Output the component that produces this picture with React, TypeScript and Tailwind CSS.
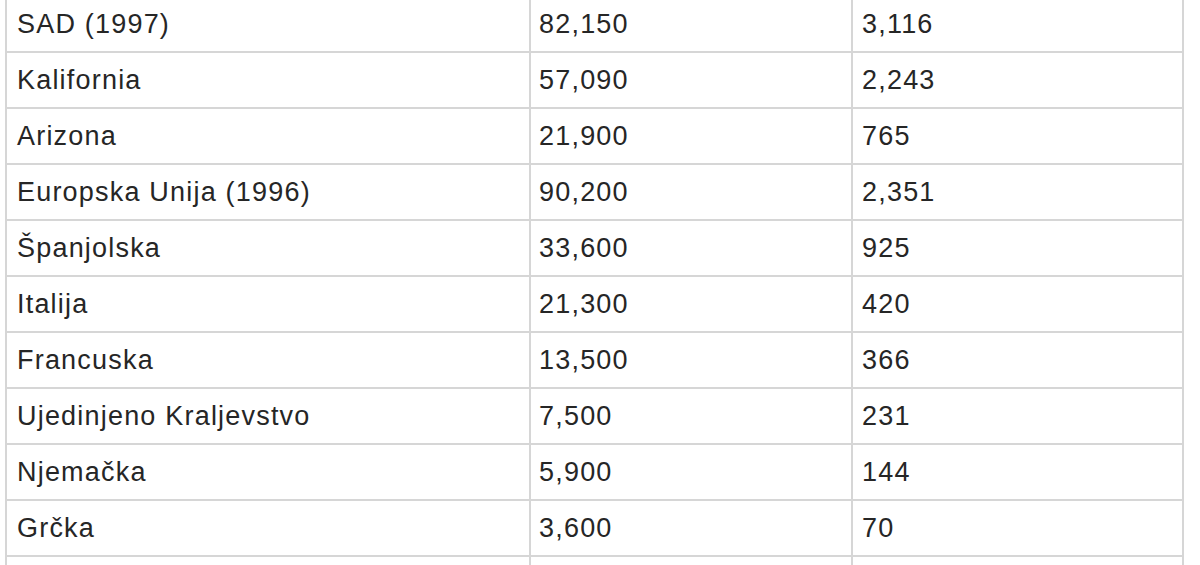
const rows = [
  ['SAD (1997)', '82,150', '3,116'],
  ['Kalifornia', '57,090', '2,243'],
  ['Arizona', '21,900', '765'],
  ['Europska Unija (1996)', '90,200', '2,351'],
  ['Španjolska', '33,600', '925'],
  ['Italija', '21,300', '420'],
  ['Francuska', '13,500', '366'],
  ['Ujedinjeno Kraljevstvo', '7,500', '231'],
  ['Njemačka', '5,900', '144'],
  ['Grčka', '3,600', '70'],
  ['', '', ''],
]

export default function App() {
  return (
    <div className="h-[565px] overflow-hidden bg-white">
      <div
        className="-mt-[3px] ml-[5px] w-[1179px] border-x-2 border-[#d6d6d6] text-[27px] leading-[30px] tracking-[1.2px] text-[#262626]"
        style={{ fontFamily: '"Liberation Sans", Arial, sans-serif' }}
      >
        {rows.map((row, i) => (
          <div key={i} className="grid h-[56px] grid-cols-[522px_322px_1fr] border-b-2 border-[#d6d6d6]">
            <div className="pl-[10px] pt-[12px] whitespace-nowrap">{row[0]}</div>
            <div className="border-l-2 border-[#d6d6d6] pl-[8px] pt-[12px]">{row[1]}</div>
            <div className="border-l-2 border-[#d6d6d6] pl-[9px] pt-[12px]">{row[2]}</div>
          </div>
        ))}
      </div>
    </div>
  )
}
